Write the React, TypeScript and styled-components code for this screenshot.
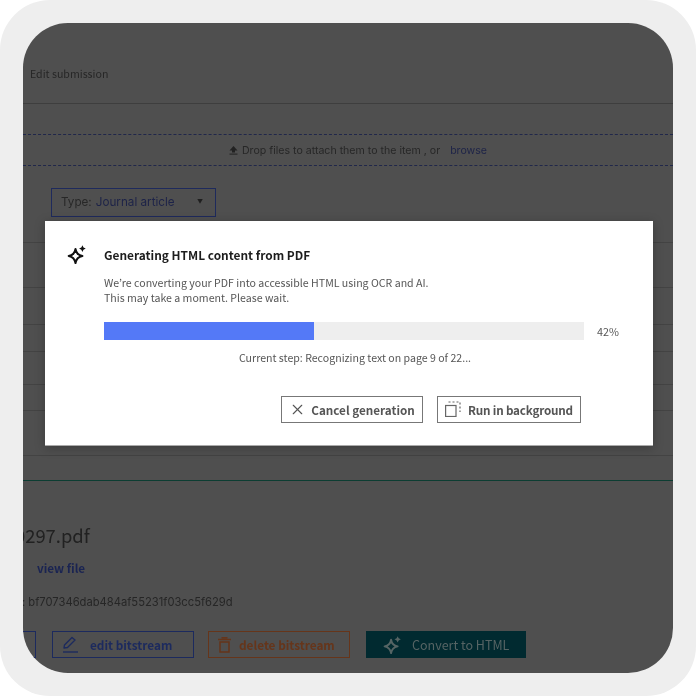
import styled, { createGlobalStyle } from 'styled-components';
import { X } from 'lucide-react';

const GlobalStyle = createGlobalStyle`
  html, body {
    margin: 0;
    background: #fff;
  }
  * {
    box-sizing: border-box;
  }
`;

const Frame = styled.div`
  width: 696px;
  height: 696px;
  padding: 23px;
  background: #eeeeee;
  border-radius: 50px;
`;

const Screen = styled.div`
  position: relative;
  width: 650px;
  height: 650px;
  overflow: hidden;
  background: #4f4f4f;
  border-radius: 45px;
  font-family: 'Noto Sans CJK KR', 'Noto Sans', sans-serif;
`;

// the page behind the dialog is slightly out of focus
const Backdrop = styled.div`
  height: 100%;
  filter: blur(0.4px);
`;

const Header = styled.header`
  display: flex;
  align-items: center;
  height: 81px;
  padding: 21px 0 0 7px;
  border-bottom: 1px solid #3e3e3e;
  color: #262626;
  font-size: 10.6px;
`;

const DropZone = styled.div`
  display: flex;
  align-items: center;
  justify-content: center;
  gap: 4px;
  height: 32px;
  margin-top: 30px;
  padding-left: 20px;
  border-top: 1px dashed #20274a;
  border-bottom: 1px dashed #20274a;
  color: #272727;
  font-family: Inter, sans-serif;
  font-size: 10.6px;
`;

const BrowseLink = styled.span`
  margin-left: 6px;
  color: #1d2348;
`;

const TypeSelect = styled.div`
  display: flex;
  align-items: center;
  width: 165px;
  height: 29px;
  margin: 22px 0 0 28px;
  padding: 0 9px 2px;
  border: 1px solid #1e2a5c;
  color: #272727;
  font-family: Inter, sans-serif;
  font-size: 11.7px;
`;

const TypeValue = styled.span`
  margin-left: 4px;
  color: #1d2348;
`;

const Caret = styled.span`
  margin-left: auto;
  margin-right: 3px;
  color: #1f1f1f;
  font-size: 6px;
`;

const RowList = styled.div`
  display: flex;
  flex-direction: column;
`;

const Row = styled.div<{ $height: number }>`
  height: ${(p) => p.$height}px;
  border-bottom: 1px solid #434343;
`;

const GreenRule = styled.div`
  height: 1px;
  margin-top: 24px;
  background: #0c3d32;
`;

const FileName = styled.div`
  margin: 42px 0 0 -8px;
  color: #212121;
  font-size: 18.4px;
  line-height: 24px;
`;

const ViewLink = styled.div`
  margin: 12px 0 0 14px;
  color: #1a2452;
  font-size: 11.7px;
  font-weight: 700;
  line-height: 18px;
`;

const Checksum = styled.div`
  margin: 16px 0 0 -1px;
  color: #262626;
  font-family: Inter, sans-serif;
  font-size: 11.2px;
  line-height: 18px;
`;

const ActionBar = styled.div`
  display: flex;
  gap: 14px;
  margin: 20px 0 0 -20px;
`;

const ActionButton = styled.div<{ $tone: string; $width: number; $pad?: number; $gap?: number }>`
  display: flex;
  align-items: center;
  gap: ${(p) => p.$gap ?? 11}px;
  width: ${(p) => p.$width}px;
  height: 27px;
  flex: none;
  padding-left: ${(p) => p.$pad ?? 9}px;
  border: 1px solid ${(p) => p.$tone};
  color: ${(p) => p.$tone};
  font-size: 11.8px;
  font-weight: 700;
`;

const StubButton = styled(ActionButton)`
  margin-right: 2px;
`;

const ConvertButton = styled(ActionButton)`
  margin-left: 2px;
  background: #012a30;
  border-color: #012a30;
  color: #556464;
  font-size: 12.5px;
  font-weight: 400;
`;

const Modal = styled.section`
  position: absolute;
  top: 198px;
  left: 22px;
  width: 608px;
  height: 225px;
  padding: 22px 34px 0 22px;
  background: #fff;
  border-bottom: 1px solid #aaa;
  box-shadow: 0 2px 10px rgba(0, 0, 0, 0.25);
`;

const ModalBody = styled.div`
  display: flex;
  flex-direction: column;
  filter: blur(0.2px);
`;

const TitleRow = styled.div`
  display: flex;
  align-items: center;
  gap: 17px;
  height: 22px;
`;

const Title = styled.h2`
  margin: 0;
  color: #1d1d1d;
  font-size: 11.9px;
  font-weight: 700;
`;

const Description = styled.p`
  margin: 10px 0 0 37px;
  color: #555;
  font-size: 10.6px;
  line-height: 15px;
`;

const ProgressRow = styled.div`
  display: flex;
  align-items: center;
  gap: 13px;
  margin: 17px 0 0 37px;
`;

const Track = styled.div`
  width: 480px;
  height: 18px;
  flex: none;
  background: #eeeeee;
`;

const Fill = styled.div<{ $width: number }>`
  width: ${(p) => p.$width}px;
  height: 100%;
  background: #5479f7;
`;

const Percent = styled.span`
  color: #555;
  font-size: 10.8px;
`;

const CurrentStep = styled.p`
  margin: 9px 0 0 37px;
  width: 502px;
  color: #555;
  font-size: 10.6px;
  line-height: 18px;
  text-align: center;
`;

const ModalActions = styled.div`
  display: flex;
  gap: 14px;
  margin: 29px 0 0 214px;
`;

const ModalButton = styled.div<{ $width: number; $tight?: boolean }>`
  display: flex;
  align-items: center;
  justify-content: center;
  gap: ${(p) => (p.$tight ? 7 : 5)}px;
  width: ${(p) => p.$width}px;
  height: 27px;
  padding-bottom: 1px;
  border: 1px solid #777;
  color: #555;
  font-size: 11.7px;
  font-weight: 700;
  letter-spacing: ${(p) => (p.$tight ? '-0.2px' : '0')};
  white-space: nowrap;
`;

const Sparkle = ({ size, color }: { size: number; color: string }) => (
  <svg width={size} height={size} viewBox="0 0 24 24" fill="none">
    <path
      d="M10.2 6 C11 11 13 13.5 18.5 14.4 C13 15.3 11 18 10.2 23 C9.4 18 7.4 15.3 2 14.4 C7.4 13.5 9.4 11 10.2 6Z"
      stroke={color}
      strokeWidth="2.4"
      strokeLinejoin="round"
    />
    <path d="M18.5 1.5 L19.8 4.2 L22.5 5.5 L19.8 6.8 L18.5 9.5 L17.2 6.8 L14.5 5.5 L17.2 4.2Z" fill={color} />
  </svg>
);

const UploadGlyph = () => (
  <svg width="9" height="10" viewBox="0 0 9 10">
    <path d="M4.5 1 L8.5 5.5 H6 V7.5 H3 V5.5 H0.5Z" fill="#222" />
    <rect x="0.5" y="8.6" width="8" height="1" fill="#222" />
  </svg>
);

const BackgroundGlyph = () => (
  <svg width="16" height="16" viewBox="0 0 16 16" fill="none" stroke="#666">
    <rect x="0.6" y="4.5" width="10.4" height="11" strokeWidth="1.2" />
    <path d="M3.5 1 H15 V11" strokeWidth="1.2" strokeDasharray="2 2" />
  </svg>
);

const PenGlyph = () => (
  <svg width="17" height="17" viewBox="0 0 17 17" fill="none" stroke="#1c2a5e" strokeWidth="1.4">
    <path d="M2 12 L2.5 9 L10 1.5 L13 4 L5.5 11.5Z" strokeLinejoin="round" />
    <path d="M1 16 H16" />
  </svg>
);

const TrashGlyph = () => (
  <svg width="13" height="16" viewBox="0 0 13 16" fill="none" stroke="#66351a" strokeWidth="1.5">
    <path d="M0 2.5 H13 M3.5 0.8 H9.5" />
    <path d="M2 5 H11 V15 H2Z" />
  </svg>
);

const rowHeights = [26, 45, 37, 27, 33, 26, 45];

export default function App() {
  return (
    <>
      <GlobalStyle />
      <Frame>
        <Screen>
          <Backdrop>
            <Header>Edit submission</Header>
            <DropZone>
              <UploadGlyph />
              Drop files to attach them to the item , or
              <BrowseLink>browse</BrowseLink>
            </DropZone>
            <TypeSelect>
              Type:<TypeValue>Journal article</TypeValue>
              <Caret>▼</Caret>
            </TypeSelect>
            <RowList>
              {rowHeights.map((height, i) => (
                <Row key={i} $height={height} />
              ))}
            </RowList>
            <GreenRule />
            <FileName>0297.pdf</FileName>
            <ViewLink>view file</ViewLink>
            <Checksum>: bf707346dab484af55231f03cc5f629d</Checksum>
            <ActionBar>
              <StubButton $tone="#1c2a5e" $width={33} />
              <ActionButton $tone="#1c2a5e" $width={142}>
                <PenGlyph />
                edit bitstream
              </ActionButton>
              <ActionButton $tone="#66351a" $width={142} $gap={8}>
                <TrashGlyph />
                delete bitstream
              </ActionButton>
              <ConvertButton $tone="#012a30" $width={160} $pad={16} $gap={10}>
                <Sparkle size={19} color="#556464" />
                Convert to HTML
              </ConvertButton>
            </ActionBar>
          </Backdrop>
          <Modal>
            <ModalBody>
              <TitleRow>
                <Sparkle size={20} color="#111" />
                <Title>Generating HTML content from PDF</Title>
              </TitleRow>
              <Description>
                We’re converting your PDF into accessible HTML using OCR and AI.
                <br />
                This may take a moment. Please wait.
              </Description>
              <ProgressRow>
                <Track>
                  <Fill $width={210} />
                </Track>
                <Percent>42%</Percent>
              </ProgressRow>
              <CurrentStep>Current step: Recognizing text on page 9 of 22...</CurrentStep>
              <ModalActions>
                <ModalButton $width={142}>
                  <X size={17} strokeWidth={1.6} />
                  Cancel generation
                </ModalButton>
                <ModalButton $width={144} $tight>
                  <BackgroundGlyph />
                  Run in background
                </ModalButton>
              </ModalActions>
            </ModalBody>
          </Modal>
        </Screen>
      </Frame>
    </>
  );
}
